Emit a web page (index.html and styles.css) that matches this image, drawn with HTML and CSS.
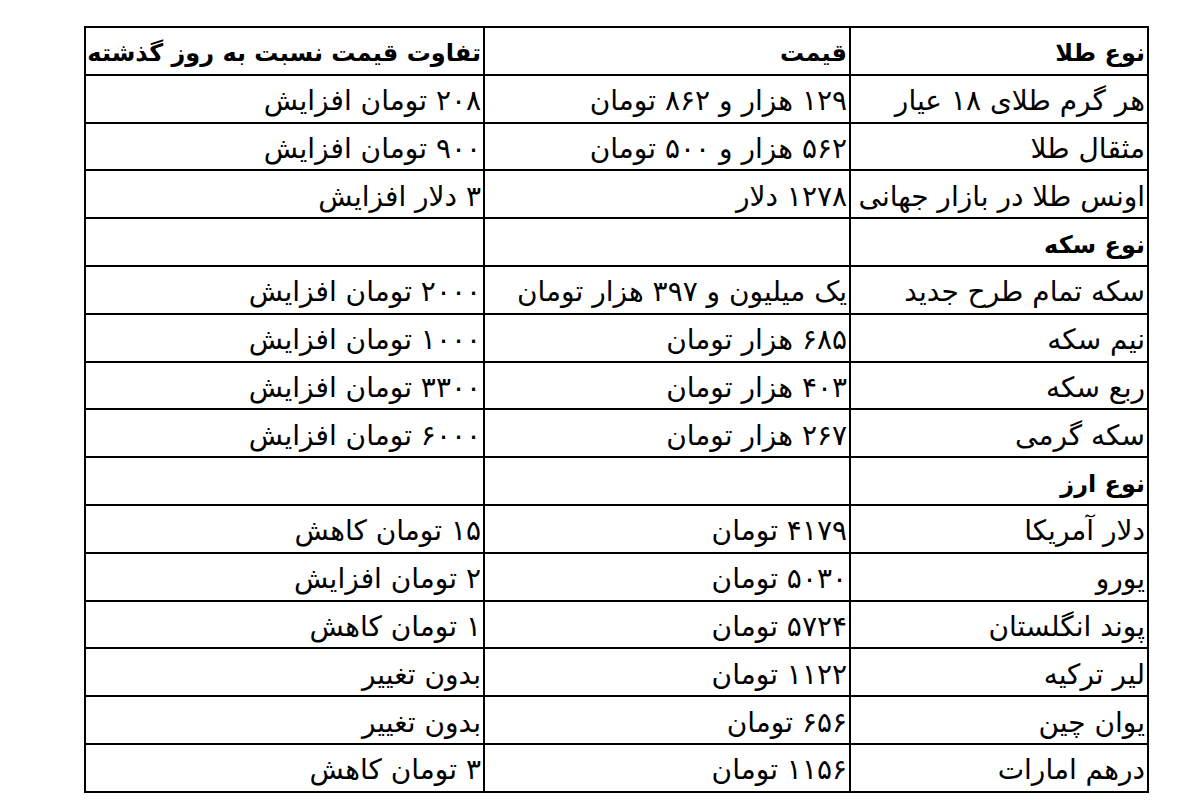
FILE: index.html
```html
<!DOCTYPE html>
<html lang="fa" dir="rtl">
<head>
<meta charset="utf-8">
<title>قیمت طلا، سکه و ارز</title>
<link rel="stylesheet" href="styles.css">
</head>
<body>
<div class="page">
<table class="prices">
<colgroup>
<col class="c-type">
<col class="c-price">
<col class="c-diff">
</colgroup>
<tbody>
<tr class="head"><td>نوع طلا</td><td>قیمت</td><td>تفاوت قیمت نسبت به روز گذشته</td></tr>
<tr><td>هر گرم طلای ۱۸ عیار</td><td>۱۲۹ هزار و ۸۶۲ تومان</td><td>۲۰۸ تومان افزایش</td></tr>
<tr><td>مثقال طلا</td><td>۵۶۲ هزار و ۵۰۰ تومان</td><td>۹۰۰ تومان افزایش</td></tr>
<tr><td>اونس طلا در بازار جهانی</td><td>۱۲۷۸ دلار</td><td>۳ دلار افزایش</td></tr>
<tr class="head"><td>نوع سکه</td><td></td><td></td></tr>
<tr><td>سکه تمام طرح جدید</td><td>یک میلیون و ۳۹۷ هزار تومان</td><td>۲۰۰۰ تومان افزایش</td></tr>
<tr><td>نیم سکه</td><td>۶۸۵ هزار تومان</td><td>۱۰۰۰ تومان افزایش</td></tr>
<tr><td>ربع سکه</td><td>۴۰۳ هزار تومان</td><td>۳۳۰۰ تومان افزایش</td></tr>
<tr><td>سکه گرمی</td><td>۲۶۷ هزار تومان</td><td>۶۰۰۰ تومان افزایش</td></tr>
<tr class="head"><td>نوع ارز</td><td></td><td></td></tr>
<tr><td>دلار آمریکا</td><td>۴۱۷۹ تومان</td><td>۱۵ تومان کاهش</td></tr>
<tr><td>یورو</td><td>۵۰۳۰ تومان</td><td>۲ تومان افزایش</td></tr>
<tr><td>پوند انگلستان</td><td>۵۷۲۴ تومان</td><td>۱ تومان کاهش</td></tr>
<tr><td>لیر ترکیه</td><td>۱۱۲۲ تومان</td><td>بدون تغییر</td></tr>
<tr><td>یوان چین</td><td>۶۵۶ تومان</td><td>بدون تغییر</td></tr>
<tr><td>درهم امارات</td><td>۱۱۵۶ تومان</td><td>۳ تومان کاهش</td></tr>
</tbody>
</table>
</div>
</body>
</html>
```

FILE: styles.css
```css
html, body {
  margin: 0;
  padding: 0;
  background: #ffffff;
}

.page {
  padding-top: 26px;
  padding-right: 51px;
  display: flex;
  justify-content: flex-start;
}

.prices {
  border-collapse: collapse;
  table-layout: fixed;
  width: 1063px;
  font-family: "DejaVu Sans", sans-serif;
  font-size: 28px;
  color: #000000;
}

.c-type { width: 298px; }
.c-price { width: 366px; }
.c-diff { width: 399px; }

.prices td {
  border: 2px solid #000000;
  height: 47.8px;
  padding: 5px 2px 0 0;
  box-sizing: border-box;
  text-align: right;
  vertical-align: middle;
  white-space: nowrap;
  overflow: hidden;
  line-height: 34px;
}

.prices tr.head td {
  font-weight: bold;
  font-size: 24px;
}
```
